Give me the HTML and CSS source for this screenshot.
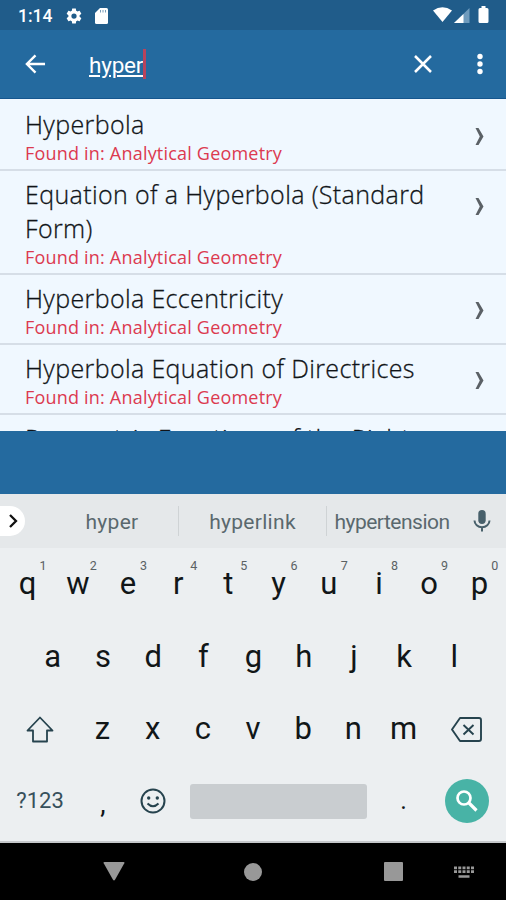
FILE: index.html
```html
<!DOCTYPE html>
<html lang="en">
<head>
<meta charset="utf-8">
<title>Search</title>
<link rel="stylesheet" href="styles.css">
</head>
<body>
<div class="phone">
  <div class="status">
    <span class="clock">1:14</span>
    <svg class="gear" width="18" height="18" viewBox="0 0 24 24"><path fill="#fff" d="M19.43 12.98c.04-.32.07-.64.07-.98s-.03-.66-.07-.98l2.11-1.65c.19-.15.24-.42.12-.64l-2-3.46c-.12-.22-.39-.3-.61-.22l-2.49 1c-.52-.4-1.08-.73-1.69-.98l-.38-2.65C14.46 2.180 14.25 2 14 2h-4c-.25 0-.46.18-.49.42l-.38 2.65c-.61.25-1.170.59-1.69.98l-2.490-1c-.23-.09-.49 0-.61.22l-2 3.460c-.13.22-.07.49.12.64l2.110 1.650c-.04.32-.07.65-.07.98s.03.66.07.98l-2.110 1.650c-.19.15-.24.42-.12.64l2 3.460c.12.22.39.3.61.22l2.490-1c.52.4 1.080.73 1.690.98l.38 2.650c.03.24.24.42.49.42h4c.25 0 .46-.18.49-.42l.38-2.650c.61-.25 1.170-.59 1.690-.98l2.490 1c.23.09.49 0 .61-.22l2-3.460c.12-.22.07-.49-.12-.64l-2.110-1.650zM12 15.500a3.500 3.500 0 1 1 0-7 3.500 3.500 0 0 1 0 7z"/></svg>
    <svg class="sd" width="13" height="16" viewBox="0 0 13 16"><path fill="#fff" d="M5 0h6.500Q13 0 13 1.500v13Q13 16 11.500 16h-10Q0 16 0 14.500V5z"/><path stroke="#205c8a" stroke-width="1" stroke-opacity=".6" d="M5.500 2v2.500M8 2v2.500M10.500 2v2.500"/></svg>
    <span class="spacer"></span>
    <svg width="58" height="18" viewBox="0 0 58 18"><path fill="#fff" d="M1 4.500Q10.500-2 20 4.500L10.500 16z"/><path fill="#6f9bbd" d="M37.500 2v15H22z"/><path fill="#fff" d="M31.500 8v9H22z"/><path fill="#fff" d="M48 2h1.500V0h4v2H55q1.500 0 1.500 1.500v12q0 1.500-1.500 1.500h-7q-1.500 0-1.500-1.500v-12Q46.500 2 48 2z"/></svg>
  </div>
  <div class="appbar">
    <svg class="back" width="21" height="20" viewBox="0 0 22 20" fill="none" stroke="#fff" stroke-width="2.500"><path d="M21 10H2.500M11 1L2 10l9 9"/></svg>
    <span class="query">hyper</span><span class="caret"></span>
    <span class="spacer"></span>
    <svg class="close" width="18" height="18" viewBox="0 0 18 18" stroke="#fff" stroke-width="2.500"><path d="M1 1l16 16M17 1L1 17"/></svg>
    <svg width="6" height="22" viewBox="0 0 6 22" fill="#fff"><circle cx="3" cy="3.500" r="2.700"/><circle cx="3" cy="11" r="2.700"/><circle cx="3" cy="18.500" r="2.700"/></svg>
  </div>
  <div class="list">
    <div class="row"><div class="text"><div class="title">Hyperbola</div><div class="sub">Found in: Analytical Geometry</div></div><svg class="chev" width="9" height="17" viewBox="0 0 8 17"><path d="M0 0h3l5 8.500L3 17H0l4.300-8.500z"/></svg></div>
    <div class="row"><div class="text"><div class="title">Equation of a Hyperbola (Standard Form)</div><div class="sub">Found in: Analytical Geometry</div></div><svg class="chev" width="9" height="17" viewBox="0 0 8 17"><path d="M0 0h3l5 8.500L3 17H0l4.300-8.500z"/></svg></div>
    <div class="row"><div class="text"><div class="title">Hyperbola Eccentricity</div><div class="sub">Found in: Analytical Geometry</div></div><svg class="chev" width="9" height="17" viewBox="0 0 8 17"><path d="M0 0h3l5 8.500L3 17H0l4.300-8.500z"/></svg></div>
    <div class="row"><div class="text"><div class="title">Hyperbola Equation of Directrices</div><div class="sub">Found in: Analytical Geometry</div></div><svg class="chev" width="9" height="17" viewBox="0 0 8 17"><path d="M0 0h3l5 8.500L3 17H0l4.300-8.500z"/></svg></div>
    <div class="row"><div class="text"><div class="title">Parametric Functions of the Right</div></div></div>
  </div>
  <div class="band"></div>
  <div class="suggest">
    <div class="expand"><svg width="9" height="14" viewBox="0 0 9 14" fill="none" stroke="#111" stroke-width="2.300"><path d="M1 1l6 6-6 6"/></svg></div>
    <div class="word w1">hyper</div>
    <div class="word w2">hyperlink</div>
    <div class="word w3">hypertension</div>
    <svg class="mic" width="18" height="22" viewBox="0 0 18 22"><rect x="5.300" y="0" width="7.400" height="14" rx="3.700" fill="#48606b"/><path d="M1.500 10.500a7.500 6.700 0 0 0 15 0M9 17v4.500" fill="none" stroke="#48606b" stroke-width="2"/></svg>
  </div>
  <div class="keyboard">
    <div class="keys top"><div>q<sup>1</sup></div><div>w<sup>2</sup></div><div>e<sup>3</sup></div><div>r<sup>4</sup></div><div>t<sup>5</sup></div><div>y<sup>6</sup></div><div>u<sup>7</sup></div><div>i<sup>8</sup></div><div>o<sup>9</sup></div><div>p<sup>0</sup></div></div>
    <div class="keys mid"><div>a</div><div>s</div><div>d</div><div>f</div><div>g</div><div>h</div><div>j</div><div>k</div><div>l</div></div>
    <div class="keys low">
      <div class="wide"><svg width="28" height="27" viewBox="0 0 28 27" fill="none" stroke="#26434e" stroke-width="1.800" stroke-linejoin="round"><path d="M14 1.500L1.500 14.500H7V25.500H21V14.500h5.500z"/></svg></div>
      <div>z</div><div>x</div><div>c</div><div>v</div><div>b</div><div>n</div><div>m</div>
      <div class="wide"><svg width="31" height="25" viewBox="0 0 31 25" fill="none" stroke="#26434e" stroke-width="1.900" stroke-linejoin="round"><path d="M9 1h19q2 0 2 2v19q0 2-2 2H9L1 12.500zM12.500 8l10 9.500M22.500 8l-10 9.500"/></svg></div>
    </div>
    <div class="keys bottom">
      <div class="sym">?123</div>
      <div class="comma">,</div>
      <svg class="smile" width="26" height="26" viewBox="0 0 26 26" fill="none" stroke="#26434e" stroke-width="2"><circle cx="13" cy="13" r="11.500"/><path d="M7.500 15.500q5.500 5.500 11 0"/><circle cx="8.700" cy="10" r="1.700" fill="#26434e" stroke="none"/><circle cx="17.300" cy="10" r="1.700" fill="#26434e" stroke="none"/></svg>
      <div class="space"></div>
      <div class="dot">.</div>
      <div class="go"><svg width="22" height="22" viewBox="0 0 22 22" fill="none" stroke="#fff"><circle cx="8" cy="8" r="6.500" stroke-width="2.700"/><path d="M13 13l7.500 7.500" stroke-width="3.200"/></svg></div>
    </div>
  </div>
  <div class="nav">
    <svg class="tri" width="22" height="19" viewBox="0 0 22 19"><path fill="#989898" d="M1.500 0h19q1.500 0 .8 1.300l-9.300 16.500q-1 1.500-2 0L.7 1.300Q0 0 1.500 0z"/></svg>
    <div class="home"></div>
    <div class="recent"></div>
    <svg class="kbd" width="20" height="12" viewBox="0 0 20 12" fill="none" stroke="#989898"><path stroke-width="2.800" stroke-dasharray="3 1.250" d="M0 1.900h20M0 5.700h20"/><path stroke-width="2.500" d="M4.500 10.500h11"/></svg>
  </div>
</div>
</body>
</html>
```
FILE: styles.css
```css
* { box-sizing: border-box; }
body { margin: 0; font-family: Roboto, "Liberation Sans", sans-serif; }
svg { display: block; flex: none; }
.phone { width: 506px; height: 900px; display: flex; flex-direction: column; overflow: hidden; background: #246a9f; }
.spacer { flex: 1; }
.status { height: 30px; flex: none; display: flex; align-items: center; padding: 0 16px 0 18px; background: #205c8a; color: #fff; }
.clock { width: 35px; font-size: 17.500px; font-weight: 500; line-height: 30px; padding-top: 2px; }
.gear { margin: 1px 0 0 12px; }
.sd { margin: 1px 0 0 12px; }
.appbar { height: 69px; flex: none; display: flex; align-items: center; padding: 0 23px 0 25px; border-bottom: 1px solid #15568e; color: #fff; }
.back { margin-right: 43px; }
.query { font-size: 22.500px; line-height: 30px; padding-top: 2px; text-decoration: underline; text-decoration-thickness: 2px; text-underline-offset: 2px; letter-spacing: -0.200px; }
.caret { width: 3px; height: 30px; background: #b8435c; }
.close { margin-right: 45px; }
.list { height: 332px; flex: none; overflow: hidden; padding-top: 2px; background: #f0f8ff; font-family: "Open Sans", sans-serif; }
.row { display: flex; align-items: flex-start; padding: 6px 22px 4px 25px; border-bottom: 2px solid #d6dee7; }
.text { flex: 1; }
.title { width: 410px; font-size: 25px; line-height: 34px; font-weight: 300; letter-spacing: 0.370px; color: #101418; -webkit-text-stroke: 0.300px #101418; }
.sub { margin-top: 1px; font-size: 18px; line-height: 23px; letter-spacing: 0.200px; color: #dc3a50; }
.chev { margin-top: 21px; fill: #5b6166; }
.band { height: 63px; flex: none; }
.suggest { height: 54px; flex: none; display: flex; align-items: center; background: #e5e8ea; color: #5a686e; font-size: 21px; }
.expand { width: 25px; height: 30px; border-radius: 0 15px 15px 0; background: #fff; display: flex; align-items: center; padding-left: 9px; }
.word { height: 30px; line-height: 32px; text-align: center; }
.w1 { width: 154px; padding-left: 21px; letter-spacing: 0.300px; border-right: 1px solid #cfd3d5; }
.w2 { width: 148px; letter-spacing: 0.300px; border-right: 1px solid #cfd3d5; }
.w3 { width: 130px; letter-spacing: -0.500px; }
.mic { margin-left: 16px; }
.keyboard { height: 295px; flex: none; background: #eceff1; border-bottom: 2px solid #c5c8ca; color: #111618; }
.keys { height: 72.500px; display: flex; justify-content: center; align-items: center; font-size: 31px; line-height: 72px; }
.keys > div { width: 50.200px; text-align: center; position: relative; }
.keys.top > div, .keys.mid > div { left: 0.500px; }
.keys sup { position: absolute; left: 37px; top: 11px; font-size: 12.500px; line-height: 14px; color: #5a6164; }
.keys .wide { width: 75px; display: flex; justify-content: center; }
.keys.bottom { justify-content: flex-start; height: 71px; }
.keys .sym { width: 80px; font-size: 22px; color: #37505b; }
.keys .comma { width: 46px; font-size: 27px; padding-top: 5px; }
.smile { margin-left: 14px; }
.keys .space { width: 177px; height: 35px; margin-left: 24px; border-radius: 3px; background: #c9cdd0; }
.keys .dot { width: 73px; font-size: 25px; }
.keys .go { width: 44px; height: 44px; margin-left: 5px; border-radius: 50%; background: #48b3a6; display: flex; align-items: center; justify-content: center; }
.nav { height: 57px; flex: none; display: flex; align-items: center; background: #000; }
.tri { margin-left: 103px; }
.home { width: 18px; height: 18px; border-radius: 50%; background: #989898; margin-left: 119px; }
.recent { width: 19px; height: 19px; border-radius: 1px; background: #989898; margin-left: 122px; }
.kbd { margin-left: 51px; }
```
